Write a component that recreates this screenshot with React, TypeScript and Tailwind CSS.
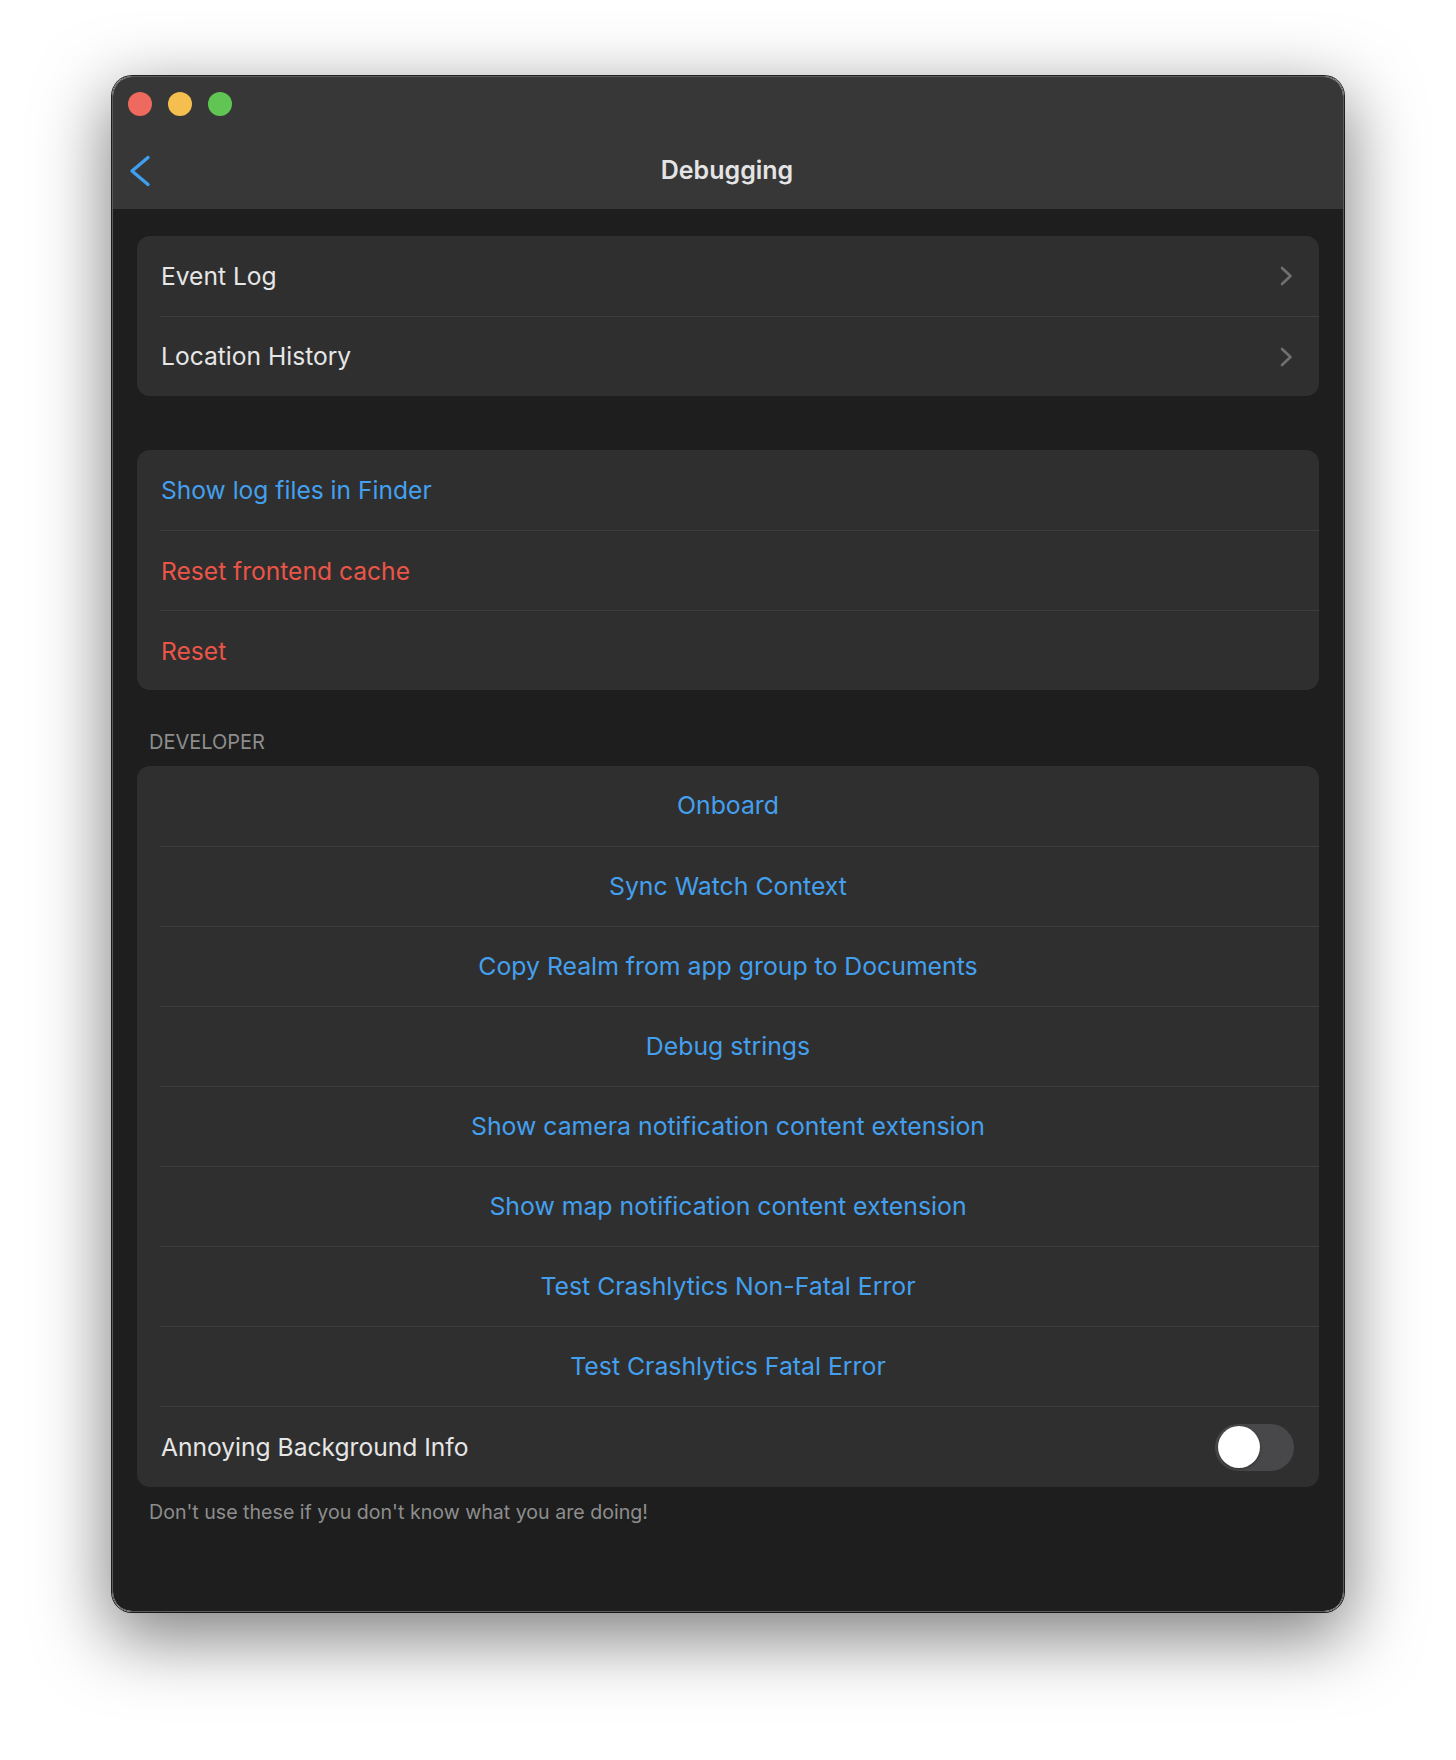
import React from 'react';

const font = { fontFamily: 'Inter, "Noto Sans", sans-serif' };

const Chevron = () => (
  <svg width="14" height="22" viewBox="0 0 14 22" fill="none">
    <polyline points="3,3 11.5,11 3,19" stroke="#707070" strokeWidth="2.6" strokeLinecap="round" strokeLinejoin="round" />
  </svg>
);

const Divider = () => <div className="ml-[23px] h-px bg-[#3d3d3d]" />;

const NavRow = ({ label, first }: { label: string; first?: boolean }) => (
  <div className={`flex ${first ? 'h-[80px]' : 'h-[79px]'} items-center justify-between pl-6 pr-[26px]`}>
    <span className="text-[24.6px] text-[#e6e6e6]">{label}</span>
    <Chevron />
  </div>
);

const ActionRow = ({ label, color, first }: { label: string; color: string; first?: boolean }) => (
  <div className={`flex ${first ? 'h-[80px]' : 'h-[79px]'} items-center pl-6 pt-px`}>
    <span className={`text-[24.6px] ${color}`}>{label}</span>
  </div>
);

const developerActions = [
  'Onboard',
  'Sync Watch Context',
  'Copy Realm from app group to Documents',
  'Debug strings',
  'Show camera notification content extension',
  'Show map notification content extension',
  'Test Crashlytics Non-Fatal Error',
  'Test Crashlytics Fatal Error',
];

export default function App() {
  return (
    <div className="min-h-[1760px] bg-white px-[112px] pt-[76px]" style={font}>
      <div className="flex h-[1536px] flex-col overflow-hidden rounded-[20px] border border-[#5a5a5a] shadow-[0_0_0_1px_rgba(0,0,0,0.85),0_22px_70px_4px_rgba(0,0,0,0.5)]">
        {/* title bar */}
        <div className="flex flex-col bg-[#373737] pb-[10px] pt-[15px]">
          <div className="flex gap-4 pl-[15px]">
            <div className="h-6 w-6 rounded-full bg-[#ee6a5e]" />
            <div className="h-6 w-6 rounded-full bg-[#f5bf4f]" />
            <div className="h-6 w-6 rounded-full bg-[#61c554]" />
          </div>
          <div className="mt-[27px] grid h-[56px] grid-cols-[1fr_auto_1fr] items-center">
            <div className="pl-4">
              <svg width="22" height="32" viewBox="0 0 22 32" fill="none">
                <polyline points="19,2.5 3,16 19,29.5" stroke="#3f9ef0" strokeWidth="3.4" strokeLinecap="round" strokeLinejoin="round" />
              </svg>
            </div>
            <div className="pr-[2px] text-[25px] font-semibold text-[#e4e4e4]">Debugging</div>
            <div />
          </div>
        </div>

        {/* content */}
        <div className="flex-1 bg-[#1e1e1e] px-6 pt-[27px]">
          <div className="overflow-hidden rounded-[13px] bg-[#2f2f2f]">
            <NavRow label="Event Log" first />
            <Divider />
            <NavRow label="Location History" />
          </div>

          <div className="mt-[54px] overflow-hidden rounded-[13px] bg-[#2f2f2f]">
            <ActionRow label="Show log files in Finder" color="text-[#44a0ee]" first />
            <Divider />
            <ActionRow label="Reset frontend cache" color="text-[#eb5547]" />
            <Divider />
            <ActionRow label="Reset" color="text-[#eb5547]" />
          </div>

          <div className="pb-[11px] pl-3 pt-[40px] text-[20px] leading-[25px] text-[#8d8d8d]">DEVELOPER</div>

          <div className="overflow-hidden rounded-[13px] bg-[#2f2f2f]">
            {developerActions.map((label, i) => (
              <div key={label}>
                {i > 0 && <Divider />}
                <div className={`flex ${i === 0 ? 'h-[80px]' : 'h-[79px]'} items-center justify-center`}>
                  <span className="text-[24.8px] text-[#44a0ee]">{label}</span>
                </div>
              </div>
            ))}
            <Divider />
            <div className="flex h-[80px] items-center justify-between pl-6 pr-[25px]">
              <span className="pt-px text-[24.6px] text-[#e6e6e6]">Annoying Background Info</span>
              <div className="flex h-[47px] w-[79px] items-center rounded-full bg-[#48484a] pl-[3px]">
                <div className="h-[42px] w-[42px] rounded-full bg-white shadow-[0_1px_3px_rgba(0,0,0,0.35)]" />
              </div>
            </div>
          </div>

          <div className="pl-3 pt-[13px] text-[19.6px] leading-[25px] text-[#8d8d8d]">
            Don't use these if you don't know what you are doing!
          </div>
        </div>
      </div>
    </div>
  );
}
